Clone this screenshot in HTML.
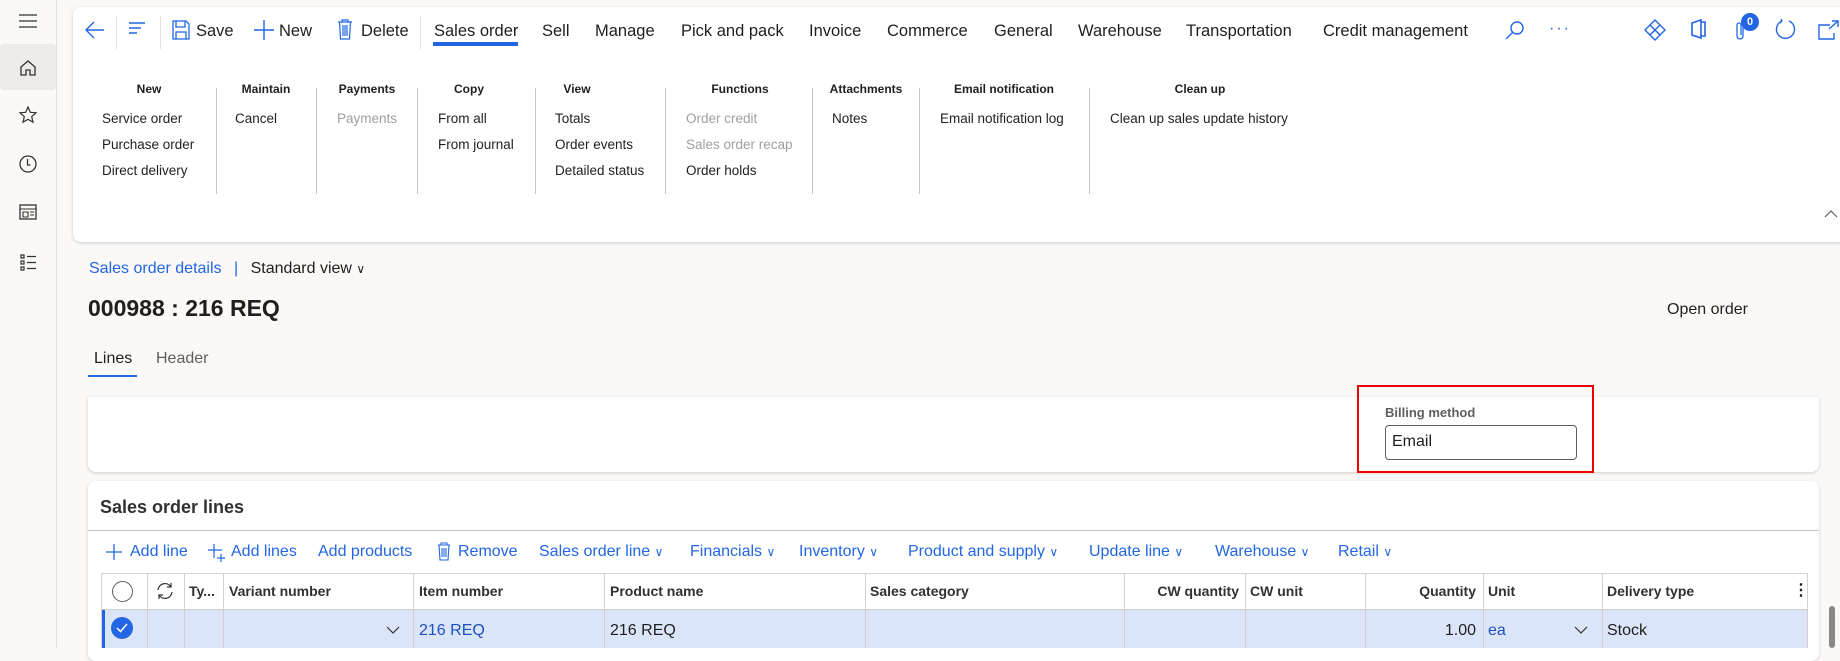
<!DOCTYPE html>
<html><head><meta charset="utf-8"><style>
*{margin:0;padding:0;box-sizing:border-box}
body{width:1840px;height:648px;overflow:hidden;background:#faf9f8;font-family:"Liberation Sans",sans-serif;color:#201f1e;position:relative}
.a{position:absolute;white-space:nowrap}
.side{position:absolute;left:0;top:0;width:57px;height:648px;background:#faf9f8;border-right:1px solid #e1dfdd}
.card{position:absolute;background:#fff;border-radius:8px;box-shadow:0 1px 3px rgba(0,0,0,.18)}
.tab{font-size:16.5px;top:22px}
.gh{font-size:12px;font-weight:bold;top:82px;transform:translateX(-50%)}
.it{font-size:13.5px}
.vs{position:absolute;top:88px;width:1px;height:106px;background:#c8c6c4}
.blue{color:#2266e3}
.act{font-size:16px;top:543px;color:#2266e3}
.hd{font-size:14px;font-weight:bold;top:583px;color:#323130}
.rw{font-size:16px;top:622px}
.cb{position:absolute;top:573px;width:1px;height:75px;background:#d2d0ce}
svg{position:absolute}
</style></head><body>
<div class="side"></div>
<svg style="left:18px;top:13px" width="20" height="16"><path d="M1 2h18M1 8h18M1 14h18" stroke="#323130" stroke-width="1.3"/></svg>
<div style="position:absolute;left:0;top:44px;width:56px;height:46px;background:#edebe9;border-radius:4px"></div>
<svg style="left:19px;top:59px" width="18" height="18"><path d="M2 8L9 2l7 6v8h-5v-5H7v5H2z" fill="none" stroke="#323130" stroke-width="1.3"/></svg>
<svg style="left:19px;top:106px" width="18" height="18"><path d="M9 1l2.3 5.3 5.7.5-4.3 3.8 1.3 5.6L9 13.3 4 16.2l1.3-5.6L1 6.8l5.7-.5z" fill="none" stroke="#323130" stroke-width="1.2"/></svg>
<svg style="left:19px;top:155px" width="18" height="18"><circle cx="9" cy="9" r="8" fill="none" stroke="#323130" stroke-width="1.3"/><path d="M8.5 4v6h3" fill="none" stroke="#323130" stroke-width="1.3"/></svg>
<svg style="left:19px;top:203px" width="18" height="18"><rect x="1" y="2" width="16" height="14" fill="none" stroke="#323130" stroke-width="1.3"/><path d="M1 6h16M4 9h5v5H4zM11 9h4M11 12h4" fill="none" stroke="#323130" stroke-width="1.1"/></svg>
<svg style="left:19px;top:253px" width="18" height="18"><path d="M2 2h3v3H2zM2 8h3v3H2zM2 14h3v3H2zM8 3.5h9M8 9.5h9M8 15.5h9" fill="none" stroke="#323130" stroke-width="1.2"/></svg>

<div class="card" style="left:73px;top:7px;width:1780px;height:235px"></div>
<svg style="left:84px;top:20px" width="22" height="20"><path d="M20 10H3M10 2L2 10l8 8" fill="none" stroke="#2266e3" stroke-width="1.4"/></svg>
<div style="position:absolute;left:116px;top:16px;width:1px;height:33px;background:#e1dfdd"></div>
<svg style="left:128px;top:22px" width="18" height="14"><path d="M1 1h16M1 6h12M1 11h8" stroke="#2266e3" stroke-width="1.4"/></svg>
<div style="position:absolute;left:160px;top:16px;width:1px;height:33px;background:#e1dfdd"></div>
<svg style="left:172px;top:20px" width="18" height="20"><path d="M1 1h13l3 3v15H1z M4 1v6h9V1 M4 19v-7h10v7" fill="none" stroke="#2266e3" stroke-width="1.3"/></svg>
<div class="a tab" style="left:196px">Save</div>
<svg style="left:254px;top:20px" width="20" height="20"><path d="M10 0v20M0 10h20" stroke="#2266e3" stroke-width="1.4"/></svg>
<div class="a tab" style="left:279px">New</div>
<svg style="left:337px;top:19px" width="16" height="21"><path d="M1 3h14M5 3V1h6v2M2.5 3l1 17h9l1-17M6 6v11M8 6v11M10 6v11" fill="none" stroke="#2266e3" stroke-width="1.2"/></svg>
<div class="a tab" style="left:361px">Delete</div>
<div style="position:absolute;left:420px;top:16px;width:1px;height:33px;background:#e1dfdd"></div>
<div class="a tab" style="left:434px">Sales order</div>
<div style="position:absolute;left:433px;top:42px;width:85px;height:4px;background:#2266e3"></div>
<div class="a tab" style="left:542px">Sell</div>
<div class="a tab" style="left:595px">Manage</div>
<div class="a tab" style="left:681px">Pick and pack</div>
<div class="a tab" style="left:809px">Invoice</div>
<div class="a tab" style="left:887px">Commerce</div>
<div class="a tab" style="left:994px">General</div>
<div class="a tab" style="left:1078px">Warehouse</div>
<div class="a tab" style="left:1186px">Transportation</div>
<div class="a tab" style="left:1323px">Credit management</div>
<svg style="left:1505px;top:20px" width="20" height="20"><circle cx="12" cy="8" r="6" fill="none" stroke="#2266e3" stroke-width="1.4"/><path d="M8 12L1 19" stroke="#2266e3" stroke-width="1.4"/></svg>
<div class="a blue" style="left:1549px;top:20px;font-size:16px;letter-spacing:2px">···</div>
<svg style="left:1644px;top:19px" width="22" height="22"><path d="M11 1l10 10-10 10L1 11zM6 6l10 10M16 6L6 16" fill="none" stroke="#2266e3" stroke-width="1.4"/></svg>
<svg style="left:1690px;top:19px" width="16" height="20"><path d="M2 4l9-3v18l-9-3zM11 3h4v14h-4" fill="none" stroke="#2266e3" stroke-width="1.6"/></svg>
<svg style="left:1736px;top:22px" width="10" height="18"><path d="M7 5v9a3 3 0 0 1-6 0V3a2 2 0 0 1 4 0v10" fill="none" stroke="#2266e3" stroke-width="1.3"/></svg>
<div class="a" style="left:1741px;top:13px;width:18px;height:18px;border-radius:9px;background:#2266e3;color:#fff;font-size:11px;font-weight:bold;text-align:center;line-height:18px">0</div>
<svg style="left:1774px;top:18px" width="22" height="22"><path d="M8 3A9 9 0 1 0 15 3M8 3l-1-2M8 3L6 5" fill="none" stroke="#2266e3" stroke-width="1.4"/></svg>
<svg style="left:1818px;top:20px" width="22" height="20"><path d="M12 5H1v14h15v-6M11 9l9-8M14 1h6v6" fill="none" stroke="#2266e3" stroke-width="1.4"/></svg>

<div class="a gh" style="left:149px">New</div>
<div class="a it" style="left:102px;top:111px">Service order</div>
<div class="a it" style="left:102px;top:137px">Purchase order</div>
<div class="a it" style="left:102px;top:163px">Direct delivery</div>
<div class="vs" style="left:216px"></div>
<div class="a gh" style="left:266px">Maintain</div>
<div class="a it" style="left:235px;top:111px">Cancel</div>
<div class="vs" style="left:316px"></div>
<div class="a gh" style="left:367px">Payments</div>
<div class="a it" style="left:337px;top:111px;color:#a19f9d">Payments</div>
<div class="vs" style="left:417px"></div>
<div class="a gh" style="left:469px">Copy</div>
<div class="a it" style="left:438px;top:111px">From all</div>
<div class="a it" style="left:438px;top:137px">From journal</div>
<div class="vs" style="left:535px"></div>
<div class="a gh" style="left:577px">View</div>
<div class="a it" style="left:555px;top:111px">Totals</div>
<div class="a it" style="left:555px;top:137px">Order events</div>
<div class="a it" style="left:555px;top:163px">Detailed status</div>
<div class="vs" style="left:665px"></div>
<div class="a gh" style="left:740px">Functions</div>
<div class="a it" style="left:686px;top:111px;color:#a19f9d">Order credit</div>
<div class="a it" style="left:686px;top:137px;color:#a19f9d">Sales order recap</div>
<div class="a it" style="left:686px;top:163px">Order holds</div>
<div class="vs" style="left:812px"></div>
<div class="a gh" style="left:866px">Attachments</div>
<div class="a it" style="left:832px;top:111px">Notes</div>
<div class="vs" style="left:919px"></div>
<div class="a gh" style="left:1004px">Email notification</div>
<div class="a it" style="left:940px;top:111px">Email notification log</div>
<div class="vs" style="left:1089px"></div>
<div class="a gh" style="left:1200px">Clean up</div>
<div class="a it" style="left:1110px;top:111px">Clean up sales update history</div>
<svg style="left:1824px;top:209px" width="14" height="9"><path d="M1 8l6-6 6 6" fill="none" stroke="#605e5c" stroke-width="1.2"/></svg>

<div class="a" style="left:89px;top:260px;font-size:16px"><span class="blue">Sales order details</span> <span class="blue" style="margin:0 8px">|</span> Standard view <span style="font-size:12px">&#8744;</span></div>
<div class="a" style="left:88px;top:295px;font-size:23px;font-weight:bold">000988 : 216 REQ</div>
<div class="a" style="left:1667px;top:301px;font-size:16px">Open order</div>
<div class="a" style="left:94px;top:350px;font-size:16px">Lines</div>
<div class="a" style="left:156px;top:350px;font-size:16px;color:#605e5c">Header</div>
<div style="position:absolute;left:88px;top:375px;width:49px;height:2px;background:#2266e3"></div>

<div class="card" style="left:88px;top:397px;width:1731px;height:75px;border-radius:0 0 8px 8px"></div>
<div style="position:absolute;left:1357px;top:385px;width:237px;height:88px;border:2px solid #e00"></div>
<div class="a" style="left:1385px;top:405px;font-size:13px;font-weight:bold;color:#605e5c">Billing method</div>
<div style="position:absolute;left:1385px;top:425px;width:192px;height:35px;border:1px solid #605e5c;border-radius:4px"></div>
<div class="a" style="left:1392px;top:433px;font-size:16px">Email</div>

<div class="card" style="left:88px;top:481px;width:1731px;height:180px"></div>
<div class="a" style="left:100px;top:497px;font-size:18px;font-weight:bold;color:#323130">Sales order lines</div>
<div style="position:absolute;left:88px;top:530px;width:1731px;height:1px;background:#c8c6c4"></div>
<svg style="left:106px;top:544px" width="16" height="16"><path d="M8 0v16M0 8h16" stroke="#2266e3" stroke-width="1.3"/></svg>
<div class="a act" style="left:130px">Add line</div>
<svg style="left:208px;top:544px" width="18" height="18"><path d="M6 0v14M0 6h14M13 10v8M9 14h8" stroke="#2266e3" stroke-width="1.2"/></svg>
<div class="a act" style="left:231px">Add lines</div>
<div class="a act" style="left:318px">Add products</div>
<svg style="left:437px;top:542px" width="14" height="19"><path d="M1 3h12M4 3V1h6v2M2 3l1 15h8l1-15M5 6v9M7 6v9M9 6v9" fill="none" stroke="#2266e3" stroke-width="1.1"/></svg>
<div class="a act" style="left:458px">Remove</div>
<div class="a act" style="left:539px">Sales order line <span style="font-size:12px">&#8744;</span></div>
<div class="a act" style="left:690px">Financials <span style="font-size:12px">&#8744;</span></div>
<div class="a act" style="left:799px">Inventory <span style="font-size:12px">&#8744;</span></div>
<div class="a act" style="left:908px">Product and supply <span style="font-size:12px">&#8744;</span></div>
<div class="a act" style="left:1089px">Update line <span style="font-size:12px">&#8744;</span></div>
<div class="a act" style="left:1215px">Warehouse <span style="font-size:12px">&#8744;</span></div>
<div class="a act" style="left:1338px">Retail <span style="font-size:12px">&#8744;</span></div>

<div style="position:absolute;left:101px;top:573px;width:1706px;height:1px;background:#d2d0ce"></div>
<div style="position:absolute;left:101px;top:609px;width:1706px;height:39px;background:#dbe5f9"></div>
<div style="position:absolute;left:101px;top:609px;width:4px;height:39px;background:#2266e3"></div>
<div style="position:absolute;left:101px;top:609px;width:1706px;height:1px;background:#d2d0ce"></div>
<div class="cb" style="left:101px"></div><div class="cb" style="left:147px"></div><div class="cb" style="left:184px"></div><div class="cb" style="left:223px"></div><div class="cb" style="left:413px"></div><div class="cb" style="left:604px"></div><div class="cb" style="left:865px"></div><div class="cb" style="left:1124px"></div><div class="cb" style="left:1245px"></div><div class="cb" style="left:1365px"></div><div class="cb" style="left:1483px"></div><div class="cb" style="left:1602px"></div><div class="cb" style="left:1807px"></div>
<div style="position:absolute;left:112px;top:581px;width:21px;height:21px;border:1px solid #605e5c;border-radius:50%"></div>
<svg style="left:155px;top:581px" width="20" height="20"><path d="M3 9a7 7 0 0 1 13-3M17 11a7 7 0 0 1-13 3M16 2v4h-4M4 18v-4h4" fill="none" stroke="#323130" stroke-width="1.2"/></svg>
<div class="a hd" style="left:189px">Ty...</div>
<div class="a hd" style="left:229px">Variant number</div>
<div class="a hd" style="left:419px">Item number</div>
<div class="a hd" style="left:610px">Product name</div>
<div class="a hd" style="left:870px">Sales category</div>
<div class="a hd" style="left:1140px;width:99px;text-align:right">CW quantity</div>
<div class="a hd" style="left:1250px">CW unit</div>
<div class="a hd" style="left:1400px;width:76px;text-align:right">Quantity</div>
<div class="a hd" style="left:1488px">Unit</div>
<div class="a hd" style="left:1607px">Delivery type</div>
<div class="a" style="left:1793px;top:580px;font-size:16px;font-weight:bold">&#8942;</div>
<div style="position:absolute;left:111px;top:617px;width:22px;height:22px;border-radius:50%;background:#2266e3"></div>
<svg style="left:115px;top:622px" width="14" height="12"><path d="M2 6l3.5 3.5L12 2" fill="none" stroke="#fff" stroke-width="1.5"/></svg>
<svg style="left:386px;top:626px" width="14" height="9"><path d="M1 1l6 6 6-6" fill="none" stroke="#323130" stroke-width="1.2"/></svg>
<div class="a rw" style="left:419px;color:#1e4fc0">216 REQ</div>
<div class="a rw" style="left:610px">216 REQ</div>
<div class="a rw" style="left:1400px;width:76px;text-align:right">1.00</div>
<div class="a rw" style="left:1488px;color:#1e4fc0">ea</div>
<svg style="left:1574px;top:626px" width="14" height="9"><path d="M1 1l6 6 6-6" fill="none" stroke="#323130" stroke-width="1.2"/></svg>
<div class="a rw" style="left:1607px">Stock</div>
<div style="position:absolute;left:1829px;top:606px;width:6px;height:42px;border-radius:3px;background:#8a8886"></div>
</body></html>
